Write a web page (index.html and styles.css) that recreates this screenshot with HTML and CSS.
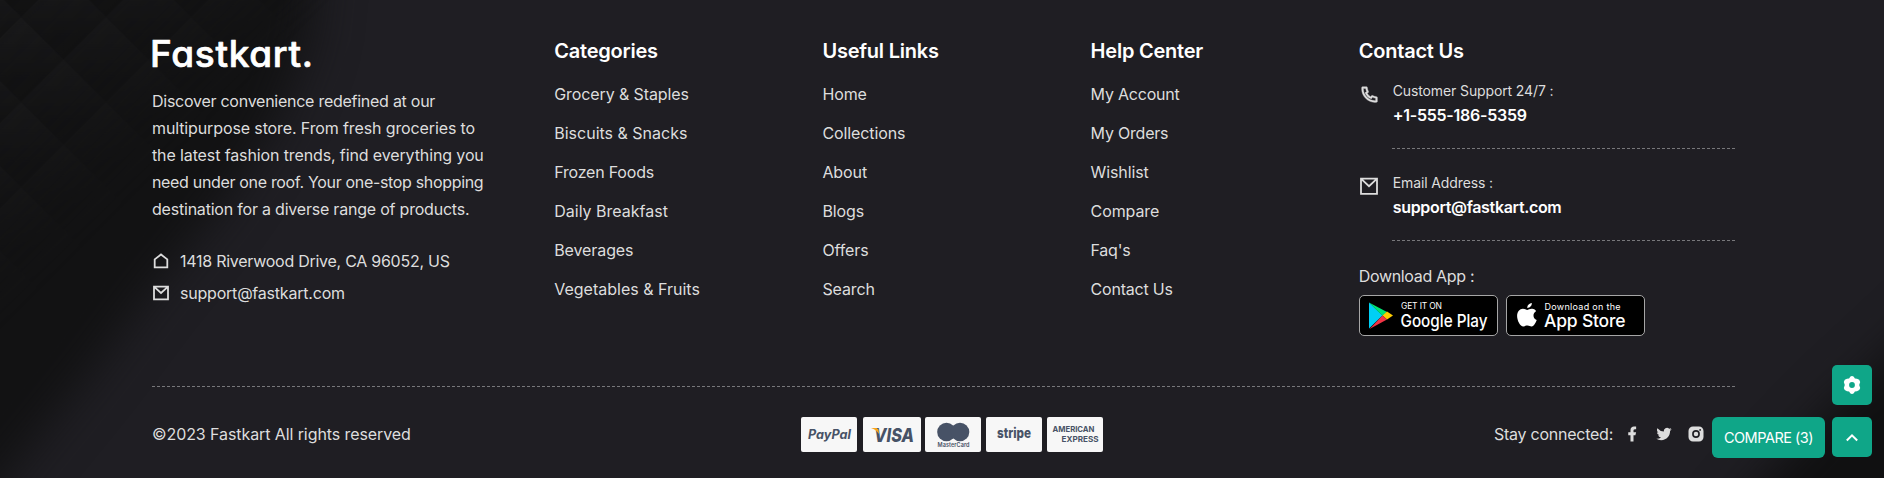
FILE: index.html
```html
<!DOCTYPE html>
<html lang="en">
<head>
<meta charset="utf-8">
<title>Fastkart</title>
<link rel="stylesheet" href="styles.css">
</head>
<body>
<footer class="footer">
  <svg class="backdrop" width="1884" height="478" viewBox="0 0 1884 478" aria-hidden="true">
    <defs>
      <filter id="soft" x="-50%" y="-50%" width="200%" height="200%" color-interpolation-filters="sRGB"><feGaussianBlur stdDeviation="23"/></filter>
      <linearGradient id="tile" x1="0" y1="0" x2="0" y2="1"><stop offset="0" stop-color="#1a1a1b"/><stop offset=".45" stop-color="#161617"/><stop offset=".75" stop-color="#121213"/><stop offset="1" stop-color="#111112"/></linearGradient>
      <pattern id="quilt" width="85" height="85" patternUnits="userSpaceOnUse" x="-21.500" y="17">
        <g fill="url(#tile)">
          <path d="M42.500 0 85 42.500 42.500 85 0 42.500z"/>
          <path d="M0-42.500 42.500 0 0 42.500-42.500 0z"/><path d="M85-42.500 127.500 0 85 42.500 42.500 0z"/>
          <path d="M0 42.500 42.500 85 0 127.500-42.500 85z"/><path d="M85 42.500 127.500 85 85 127.500 42.500 85z"/>
        </g>
      </pattern>
      <linearGradient id="fade" gradientUnits="userSpaceOnUse" x1="0" y1="0" x2="165" y2="165"><stop offset="0" stop-color="#eee"/><stop offset=".5" stop-color="#999"/><stop offset="1" stop-color="#000"/></linearGradient>
      <mask id="quiltmask"><rect width="340" height="340" fill="url(#fade)"/></mask>
    </defs>
    <path d="M-80-80H322L310 40 278 120 222 205 150 292 90 372 20 458-60 560z" fill="#121213" filter="url(#soft)"/>
    <rect width="340" height="340" fill="url(#quilt)" mask="url(#quiltmask)"/>
    <path d="M1980 270 1884 360 1830 410 1745 500 1700 560H1980z" fill="#101011" filter="url(#soft)"/>
  </svg>

  <div class="columns">
    <section class="col about">
      <svg class="logo" width="162" height="36" viewBox="0 0 162 36" role="img"><text class="wordmark" x="-2" y="32" textLength="163">Fastkart.</text></svg>
      <p class="blurb"><span class="t3">Discover convenience redefined at our</span><br><span class="t1">multipurpose store. From fresh groceries to</span><br><span class="t1">the latest fashion trends, find everything you</span><br><span class="t4">need under one roof. Your one-stop shopping</span><br><span class="t2">destination for a diverse range of products.</span></p>
      <ul class="address">
        <li><svg width="18" height="18" viewBox="0 0 18 18"><path class="line" d="M2.700 15.300V7.400L9 2.500l6.300 4.900v7.900z"/></svg><span class="t3">1418 Riverwood Drive, CA 96052, US</span></li>
        <li><svg width="18" height="18" viewBox="0 0 18 18"><path class="line" d="M2 2.700h14v12.600H2zM2.500 3.200 9 9l6.500-5.800"/></svg><span class="t2">support@fastkart.com</span></li>
      </ul>
    </section>
    <section class="col">
      <h2>Categories</h2>
      <ul class="links"><li>Grocery &amp; Staples</li><li class="t0">Biscuits &amp; Snacks</li><li class="t2">Frozen Foods</li><li class="t0">Daily Breakfast</li><li>Beverages</li><li class="t0">Vegetables &amp; Fruits</li></ul>
    </section>
    <section class="col">
      <h2>Useful Links</h2>
      <ul class="links"><li>Home</li><li>Collections</li><li>About</li><li>Blogs</li><li>Offers</li><li>Search</li></ul>
    </section>
    <section class="col">
      <h2>Help Center</h2>
      <ul class="links"><li class="t2">My Account</li><li class="t2">My Orders</li><li>Wishlist</li><li>Compare</li><li class="t3">Faq's</li><li class="t2">Contact Us</li></ul>
    </section>
    <section class="col contact">
      <h2>Contact Us</h2>
      <div class="entry">
        <svg width="21" height="21" viewBox="0 0 24 24"><path class="glyph phone" d="M9.366 10.682a10.556 10.556 0 0 0 3.952 3.952l.884-1.238a1 1 0 0 1 1.294-.296 11.422 11.422 0 0 0 4.583 1.364 1 1 0 0 1 .921.997v4.462a1 1 0 0 1-.898.995c-.53.055-1.064.082-1.602.082C9.940 21 3 14.060 3 5.500c0-.538.027-1.072.082-1.602A1 1 0 0 1 4.077 3h4.462a1 1 0 0 1 .997.921A11.422 11.422 0 0 0 10.900 8.504a1 1 0 0 1-.296 1.294l-1.238.884zm-2.522-.657 1.900-1.357A13.410 13.410 0 0 1 7.647 5H5.010c-.006.166-.009.333-.009.500C5 12.956 11.044 19 18.500 19c.167 0 .334-.003.500-.010v-2.637a13.410 13.410 0 0 1-3.668-1.097l-1.357 1.900a12.442 12.442 0 0 1-1.588-.750l-.058-.033a12.556 12.556 0 0 1-4.702-4.702l-.033-.058a12.442 12.442 0 0 1-.750-1.588z"/></svg>
        <div class="detail"><span class="label">Customer Support 24/7 :</span><strong class="t3">+1-555-186-5359</strong></div>
      </div>
      <div class="entry">
        <svg width="21" height="21" viewBox="0 0 21 21"><path class="line" d="M2 2.600H18V17.800H2zM2.500 3.200 10 10.200 17.500 3.200"/></svg>
        <div class="detail"><span class="label">Email Address :</span><strong class="t4">support@fastkart.com</strong></div>
      </div>
      <p class="download t4">Download App :</p>
      <div class="stores">
        <svg width="139" height="41" viewBox="0 0 139 41"><rect class="badge" x=".5" y=".5" width="138" height="40" rx="4.500"/>
          <path d="M10 7.500v26L23.500 20.500z" fill="#00cff5"/><path d="M10 7.500 28 17 23.500 20.700z" fill="#00e676"/><path d="M28 16.500 34 20.500 28 24.500 23.500 20.500z" fill="#ffce00"/><path d="M10.500 34 23.500 20.500 28 24.500z" fill="#f33446"/>
          <text class="store-top" x="42" y="13.500" textLength="41">GET IT ON</text><text class="store-name google" x="41.500" y="31.500" textLength="87" lengthAdjust="spacingAndGlyphs">Google Play</text></svg>
        <svg width="139" height="41" viewBox="0 0 139 41"><rect class="badge" x=".5" y=".5" width="138" height="40" rx="4.500"/>
          <path d="M25.800 8c.3 2.600-2.100 5-4.500 4.900C21 10.500 23.300 8.200 25.800 8zM29.800 16.500c-3.400 2-3 7 .9 8.600-.8 2.600-2.700 6.200-5 6.400-1.600.1-2.200-.9-4.200-.9s-2.700.9-4.200.9c-3 0-6.200-6-6.200-10.600 0-4.400 2.700-7.100 5.700-7.200 1.800 0 3.300 1.200 4.400 1.200 1 0 2.800-1.400 5-1.200 1.600.1 2.900.8 3.600 1.900z" fill="#fff"/>
          <text class="store-top apple-top" x="38.500" y="14.500" textLength="76">Download on the</text><text class="store-name" x="38" y="32" textLength="81.500">App Store</text></svg>
      </div>
    </section>
  </div>

  <div class="bottom">
    <p class="copyright">©2023 Fastkart All rights reserved</p>
    <svg class="cards" width="302" height="35" viewBox="0 0 302 35">
      <g fill="#f7f7f7"><rect width="56" height="35" rx="2"/><rect x="62" width="58" height="35" rx="2"/><rect x="124" width="56" height="35" rx="2"/><rect x="185" width="56" height="35" rx="2"/><rect x="246" width="56" height="35" rx="2"/></g>
      <g class="cardtext">
        <text x="7" y="21.500" font-size="12.500" font-style="italic" textLength="43" lengthAdjust="spacingAndGlyphs">PayPal</text>
        <text x="73" y="24.500" font-size="19" font-style="italic" font-weight="800" textLength="40" lengthAdjust="spacingAndGlyphs">VISA</text>
        <path d="M70 11h5.500l2 1.500.5 4.500C76 14 73.500 12 70 11z" fill="#f9a51a"/>
        <circle cx="145.500" cy="15" r="9.300"/><circle cx="159" cy="15" r="9.300"/>
        <text x="136.500" y="29.500" font-size="5.500" font-weight="600" textLength="32">MasterCard</text>
        <text x="196" y="21" font-size="14" font-weight="800" textLength="34" lengthAdjust="spacingAndGlyphs">stripe</text>
        <text x="251.500" y="15" font-size="7.500" textLength="42" lengthAdjust="spacingAndGlyphs">AMERICAN</text>
        <text x="260.500" y="24.500" font-size="7.500" textLength="37" lengthAdjust="spacingAndGlyphs">EXPRESS</text>
      </g>
    </svg>
    <div class="social">
      <span class="stay">Stay connected:</span>
      <svg width="18" height="18" viewBox="0 0 24 24"><path class="glyph" d="M14 13.500h2.500l1-4H14v-2c0-1.030 0-2 2-2h1.500V2.140c-.326-.043-1.557-.140-2.857-.140C11.928 2 10 3.657 10 6.700v2.800H7v4h3V22h4v-8.500z"/></svg>
      <svg width="18" height="18" viewBox="0 0 24 24"><path class="glyph" d="M22.162 5.656a8.384 8.384 0 0 1-2.402.658A4.196 4.196 0 0 0 21.600 4c-.820.488-1.719.830-2.656 1.015a4.182 4.182 0 0 0-7.126 3.814 11.874 11.874 0 0 1-8.620-4.370 4.168 4.168 0 0 0-.566 2.103c0 1.450.738 2.731 1.860 3.481a4.168 4.168 0 0 1-1.894-.523v.052a4.185 4.185 0 0 0 3.355 4.101 4.210 4.210 0 0 1-1.890.072A4.185 4.185 0 0 0 7.970 16.650a8.394 8.394 0 0 1-6.191 1.732 11.830 11.830 0 0 0 6.410 1.880c7.693 0 11.900-6.373 11.900-11.900 0-.180-.005-.362-.013-.540a8.496 8.496 0 0 0 2.087-2.165z"/></svg>
      <svg width="18" height="18" viewBox="0 0 24 24"><path class="glyph" fill-rule="evenodd" d="M8 2h8a6 6 0 0 1 6 6v8a6 6 0 0 1-6 6H8a6 6 0 0 1-6-6V8a6 6 0 0 1 6-6zM12 6.800a5.200 5.200 0 1 0 0 10.400 5.200 5.200 0 0 0 0-10.400zM12 9a3 3 0 1 1 0 6 3 3 0 0 1 0-6zM17.500 5.300a1.200 1.200 0 1 0 0 2.400 1.200 1.200 0 0 0 0-2.400z"/></svg>
    </div>
  </div>

  <div class="floating">
    <button class="compare">COMPARE (3)</button>
    <div class="stack">
      <button class="square"><svg width="20" height="20" viewBox="0 0 20 20"><path fill="#fff" fill-rule="evenodd" d="M8.200 1.800Q10 .2 11.800 1.800L12.900 3.600 15 3.700Q17.800 4.200 18.200 6.900L17.200 10 18.200 13.100Q17.800 15.800 15 16.300L12.900 16.400 11.800 18.200Q10 19.800 8.200 18.200L7.100 16.400 5 16.300Q2.200 15.800 1.800 13.100L2.800 10 1.800 6.900Q2.200 4.200 5 3.700L7.100 3.600zM10 7.100a2.900 2.900 0 1 0 0 5.800 2.900 2.900 0 0 0 0-5.800z"/></svg></button>
      <button class="square"><svg width="20" height="20" viewBox="0 0 20 20"><path d="M4.800 13.500 10 8.300l5.200 5.200" fill="none" stroke="#fff" stroke-width="2"/></svg></button>
    </div>
  </div>
</footer>
</body>
</html>
```
FILE: styles.css
```css
* { box-sizing: border-box; margin: 0; padding: 0; }
body { background: #1e1e22; font-family: Inter, "Liberation Sans", sans-serif; font-size: 16px; color: #dddddd; }
ul { list-style: none; }
svg { display: block; flex: none; }
.footer { position: relative; width: 1884px; height: 478px; overflow: hidden; background: #1f1e23; }
.backdrop { position: absolute; left: 0; top: 0; }
.columns { position: relative; display: grid; grid-template-columns: 3fr 2fr 2fr 2fr 3fr; width: 1609px; height: 386px; margin-left: 140px; padding-top: 35px; }
.col { padding: 0 12px; white-space: nowrap; }
.line { fill: none; stroke: #dddddd; stroke-width: 1.800; }
.glyph { fill: #dddddd; }
.phone { stroke: #dddddd; stroke-width: .4; }
.logo { overflow: visible; }
.wordmark { font: 500 37px Inter, sans-serif; font-feature-settings: "cv11"; fill: #fff; stroke: #fff; stroke-width: .7; stroke-linejoin: round; }
.blurb { margin-top: 17px; line-height: 27px; }
.address { margin-top: 22px; }
.address li { display: flex; align-items: center; gap: 10px; height: 32px; }
h2 { font-size: 20px; font-weight: 600; line-height: 32px; color: #fff; letter-spacing: -.22px; }
.links { margin-top: 8px; }
.links li { height: 39px; line-height: 39px; letter-spacing: -.1px; }
.t0, .links .t0 { letter-spacing: 0; }
.t1 { letter-spacing: -.12px; }
.t2, .links .t2 { letter-spacing: -.21px; }
.t3, .links .t3 { letter-spacing: -.26px; }
.t4 { letter-spacing: -.33px; }
.entry { display: flex; gap: 12px; }
.entry > svg { margin-top: 17px; }
.detail { display: flex; flex-direction: column; flex: none; width: 345px; height: 92px; padding: 13px 0 0 1px; background: repeating-linear-gradient(90deg, #77777a 0 3px, transparent 3px 5px) left 0 bottom 10px / 100% 1px no-repeat; }
.label { font-size: 14px; line-height: 22px; letter-spacing: -.12px; }
.detail strong { font-weight: 600; line-height: 26px; color: #fff; }
.download { line-height: 24px; margin-top: 13px; }
.stores { display: flex; gap: 8px; margin-top: 7px; }
.badge { fill: #000; stroke: #a6a6a6; }
.store-top { font: 400 8.500px Inter, sans-serif; fill: #fff; }
.apple-top { font-size: 9px; }
.store-name { font: 500 17.500px Inter, sans-serif; fill: #fff; }
.google { font-weight: 500; font-size: 17.500px; }
.bottom { position: relative; display: grid; grid-template-columns: 649px 302px 1fr; align-items: center; width: 1585px; height: 92px; margin-left: 152px; padding-top: 4px; background: repeating-linear-gradient(90deg, #77777a 0 3px, transparent 3px 5px) top / 100% 1px no-repeat; }
.copyright { letter-spacing: -.09px; }
.cardtext { fill: #475266; font-family: Inter, sans-serif; font-weight: 700; }
.social { display: flex; align-items: center; gap: 14px; justify-self: end; margin-right: 32px; }
.stay { margin-right: -4px; letter-spacing: -.25px; }
.floating { position: absolute; right: 12px; bottom: 20px; display: flex; align-items: flex-end; gap: 7px; }
.stack { display: flex; flex-direction: column; gap: 12px; padding-bottom: 1px; }
button { border: 0; background: #0fa688; color: #fff; font: 14.500px Inter, sans-serif; letter-spacing: -.5px; }
.compare { width: 113px; height: 41px; border-radius: 6px; }
.square { display: grid; place-items: center; width: 40px; height: 40px; border-radius: 5px; }
```
